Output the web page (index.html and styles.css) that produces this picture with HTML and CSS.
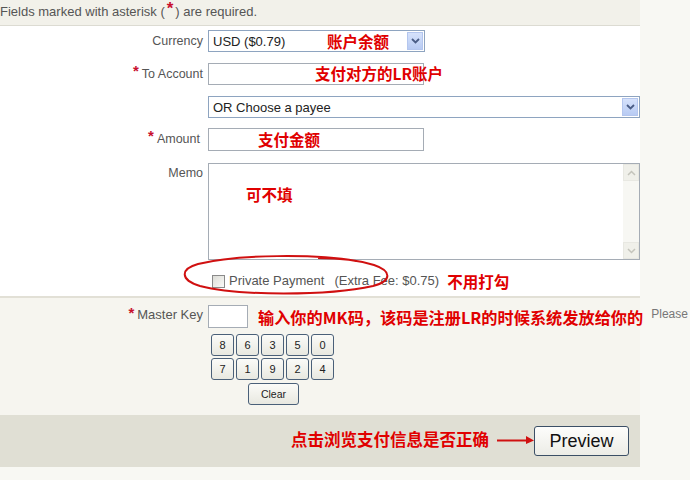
FILE: index.html
```html
<!DOCTYPE html>
<html>
<head>
<meta charset="utf-8">
<link rel="stylesheet" href="styles.css">
</head>
<body>
<div class="page">
  <div class="note-bar">Fields marked with asterisk (<span class="req req-top">*</span>) are required.</div>

  <div class="form-main">
    <div class="row r-currency">
      <div class="lbl">Currency</div>
      <div class="field">
        <div class="select sel-short">
          <span class="sel-text">USD ($0.79)</span>
          <span class="sel-btn"><svg width="9" height="6" viewBox="0 0 9 6"><path d="M1 1 L4.5 4.5 L8 1" fill="none" stroke="#4a5d86" stroke-width="1.8"/></svg></span>
        </div>
        <span class="anno a-currency">账户余额</span>
      </div>
    </div>

    <div class="row r-account">
      <div class="lbl"><span class="req">*</span>To Account</div>
      <div class="field">
        <div class="text-input in-short"></div>
        <span class="anno a-account">支付对方的LR账户</span>
      </div>
    </div>

    <div class="row r-payee">
      <div class="lbl"></div>
      <div class="field">
        <div class="select sel-long">
          <span class="sel-text">OR Choose a payee</span>
          <span class="sel-btn"><svg width="9" height="6" viewBox="0 0 9 6"><path d="M1 1 L4.5 4.5 L8 1" fill="none" stroke="#4a5d86" stroke-width="1.8"/></svg></span>
        </div>
      </div>
    </div>

    <div class="row r-amount">
      <div class="lbl lbl-amount"><span class="req">*</span>Amount</div>
      <div class="field">
        <div class="text-input in-short in-amount"></div>
        <span class="anno a-amount">支付金额</span>
      </div>
    </div>

    <div class="row r-memo">
      <div class="lbl lbl-memo">Memo</div>
      <div class="field">
        <div class="textarea">
          <div class="scroll">
            <span class="scroll-btn"><svg width="9" height="6" viewBox="0 0 9 6"><path d="M1 5 L4.5 1.5 L8 5" fill="none" stroke="#c4c4bc" stroke-width="1.5"/></svg></span>
            <span class="scroll-btn"><svg width="9" height="6" viewBox="0 0 9 6"><path d="M1 1 L4.5 4.5 L8 1" fill="none" stroke="#c4c4bc" stroke-width="1.5"/></svg></span>
          </div>
        </div>
        <span class="anno a-memo">可不填</span>
      </div>
    </div>

    <div class="row r-check">
      <div class="lbl"></div>
      <div class="field check-field">
        <span class="checkbox"></span>
        <span class="check-text">Private Payment</span>
        <span class="fee">(Extra Fee: $0.75)</span>
        <span class="anno-inline">不用打勾</span>
      </div>
    </div>

    <svg class="ring" width="220" height="48" viewBox="0 0 220 48">
      <path d="M178 9 C140 2 60 2 20 12 C2 17 2 28 22 34 C60 44 150 44 195 34 C214 29 214 19 196 13 C180 8 160 6 140 6" fill="none" stroke="#d01010" stroke-width="2"/>
    </svg>
  </div>

  <div class="form-key">
    <div class="row r-key">
      <div class="lbl lbl-key"><span class="req">*</span>Master Key</div>
      <div class="field key-field">
        <div class="text-input in-key"></div>
        <span class="anno-inline anno-key">输入你的MK码，该码是注册LR的时候系统发放给你的</span>
        <span class="please">Please</span>
      </div>
    </div>
    <div class="row r-pad">
      <div class="lbl"></div>
      <div class="keypad">
        <div class="keys">
          <span class="key">8</span><span class="key">6</span><span class="key">3</span><span class="key">5</span><span class="key">0</span>
          <span class="key">7</span><span class="key">1</span><span class="key">9</span><span class="key">2</span><span class="key">4</span>
        </div>
        <span class="key key-clear">Clear</span>
      </div>
    </div>
  </div>

  <div class="actions">
    <span class="anno-inline anno-preview">点击浏览支付信息是否正确</span>
    <svg class="arrow" width="38" height="10" viewBox="0 0 38 10"><path d="M0 5.5 L31 5.5" stroke="#d01010" stroke-width="2"/><path d="M29 1 L37 5.5 L29 9 Z" fill="#d01010"/></svg>
    <span class="btn-preview">Preview</span>
  </div>
</div>
</body>
</html>
```

FILE: styles.css
```css
html, body {
  margin: 0;
  padding: 0;
}
body {
  background: #f8f8f3;
  font-family: "Liberation Sans", Arial, sans-serif;
  color: #555;
  width: 690px;
  height: 480px;
  overflow: hidden;
}
.page {
  width: 640px;
}
.note-bar {
  height: 25px;
  line-height: 24px;
  font-size: 13px;
  background: #f2f1ea;
  border-bottom: 1px solid #dcdbd2;
  white-space: nowrap;
  color: #555;
}
.req {
  color: #c8102e;
  font-weight: bold;
  font-size: 15px;
  display: inline-block;
  line-height: 10px;
  vertical-align: top;
  margin-top: 3px;
  margin-right: 3px;
}
.req-top {
  margin: 4px 2px 0 2px;
  font-size: 17px;
}
.form-main {
  position: relative;
  background: #ffffff;
  padding-top: 4px;
  border-bottom: 2px solid #e2e0d6;
}
.row {
  display: grid;
  grid-template-columns: 203px 432px;
  column-gap: 5px;
}
.lbl {
  text-align: right;
  font-size: 12.5px;
  line-height: 22px;
  color: #555;
  white-space: nowrap;
}
.lbl-amount {
  padding-right: 3px;
}
.lbl-memo {
  line-height: 18px;
  padding-top: 1px;
}
.field {
  position: relative;
}
.r-account { margin-top: 11px; }
.r-payee { margin-top: 11px; }
.r-amount { margin-top: 10px; }
.r-memo { margin-top: 12px; }
.r-check { margin-top: 11px; height: 20px; padding-bottom: 5px; }

.select {
  box-sizing: border-box;
  height: 22px;
  border: 1px solid #8ea4c0;
  background: #fff;
  display: flex;
  align-items: center;
  justify-content: space-between;
  padding: 0 1px 0 4px;
}
.sel-short { width: 217px; }
.sel-long { width: 432px; }
.sel-text {
  font-size: 13px;
  color: #222;
}
.sel-btn {
  box-sizing: border-box;
  width: 16px;
  height: 18px;
  background: linear-gradient(#d6e2fb, #b8cbf3);
  border: 1px solid #b4c6ee;
  display: flex;
  align-items: center;
  justify-content: center;
}
.text-input {
  box-sizing: border-box;
  height: 22px;
  border: 1px solid #a5acb5;
  background: #fff;
}
.in-short { width: 216px; }
.in-amount { height: 23px; }
.textarea {
  box-sizing: border-box;
  width: 432px;
  height: 97px;
  border: 1px solid #a5acb5;
  background: #fff;
  display: flex;
  justify-content: flex-end;
}
.scroll {
  width: 16px;
  background: #f7f7f3;
  display: flex;
  flex-direction: column;
  justify-content: space-between;
}
.scroll-btn {
  height: 17px;
  background: #f0f0ea;
  border: 1px solid #e8e8e2;
  box-sizing: border-box;
  display: flex;
  align-items: center;
  justify-content: center;
}
.anno, .anno-inline {
  font-family: "Noto Sans CJK SC", sans-serif;
  font-weight: 700;
  color: #e00000;
  font-size: 15.5px;
  white-space: nowrap;
}
.anno {
  position: absolute;
  line-height: 20px;
}
.a-currency { left: 119px; top: 1px; }
.a-account { left: 107px; top: 0px; }
.a-amount { left: 50px; top: 1px; }
.a-memo { left: 38px; top: 21px; }

.check-field {
  display: flex;
  align-items: center;
  font-size: 13px;
  line-height: 20px;
  color: #555;
}
.checkbox {
  box-sizing: border-box;
  width: 13px;
  height: 13px;
  border: 1px solid #8a8a8a;
  background: linear-gradient(135deg, #dcdcd6, #fafaf8);
  margin-left: 4px;
  margin-right: 4px;
}
.fee { margin-left: 10px; }
.check-field .anno-inline { margin-left: 8px; }
.ring {
  position: absolute;
  left: 178px;
  top: 226px;
}

.form-key {
  background: #f6f5ef;
  padding-top: 7px;
  padding-bottom: 10px;
}
.lbl-key {
  font-size: 13px;
  line-height: 20px;
}
.key-field {
  display: flex;
  align-items: center;
  height: 23px;
}
.in-key {
  width: 40px;
  height: 23px;
  flex: none;
}
.anno-key {
  margin-left: 10px;
  font-size: 16.2px;
}
.please {
  margin-left: 8px;
  font-size: 12px;
  color: #777;
  white-space: nowrap;
  margin-top: -6px;
}
.r-pad { margin-top: 6px; }
.keypad {
  width: 123px;
  margin-left: 3px;
  display: flex;
  flex-direction: column;
  align-items: center;
}
.keys {
  display: grid;
  grid-template-columns: repeat(5, 23px);
  grid-auto-rows: 22px;
  gap: 2px;
}
.key {
  box-sizing: border-box;
  border: 1px solid #4a6079;
  border-radius: 3px;
  background: linear-gradient(#fbfbf8, #e8e8e0);
  font-size: 11px;
  color: #222;
  display: flex;
  align-items: center;
  justify-content: center;
}
.key-clear {
  width: 51px;
  height: 22px;
  margin-top: 3px;
  font-size: 10.5px;
  margin-left: 2px;
}
.actions {
  height: 52px;
  background: #e0dfd4;
  display: flex;
  align-items: center;
  justify-content: flex-end;
  padding-right: 11px;
}
.anno-preview {
  font-size: 16.5px;
  margin-right: 8px;
  margin-top: -4px;
}
.arrow {
  margin-top: -2px;
}
.btn-preview {
  box-sizing: border-box;
  width: 95px;
  height: 30px;
  border: 1px solid #3b4f66;
  border-radius: 3px;
  background: linear-gradient(#fdfdfb, #ecece6);
  font-size: 18px;
  color: #111;
  display: flex;
  align-items: center;
  justify-content: center;
  margin-left: -1px;
}
```
